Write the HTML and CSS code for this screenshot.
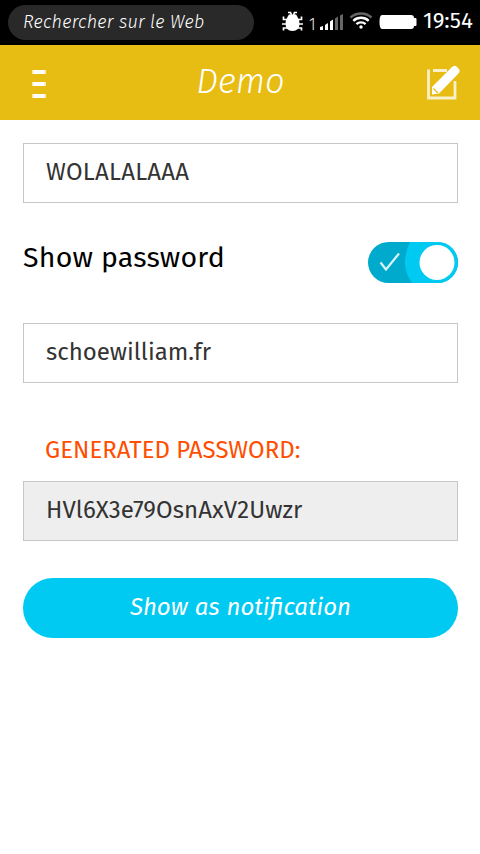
FILE: index.html
```html
<!DOCTYPE html>
<html lang="fr">
<head>
<meta charset="utf-8">
<meta name="viewport" content="width=device-width">
<title>Demo</title>
<link rel="stylesheet" href="styles.css">
</head>
<body>
<div class="statusbar">
  <div class="search"><span class="search-text">Rechercher sur le Web</span></div>
  <svg class="status-icons" width="138" height="45" viewBox="280 0 138 45">
    <path d="M289 14.500h7q1 1 1.500 2.500q2 2.500 2 6.500q0 7.500-7 7.500t-7-7.500q0-4 2-6.500q.5-1.500 1.500-2.500z" fill="#fff"/>
    <path d="M288 12.500h2.500l1 2.500M297 12.500h-2.500l-1 2.500M283.500 16.500v3h4M301.500 16.500v3h-4M282 24h21M283.500 30.500v-2.500h4M301.500 30.500v-2.500h-4" fill="none" stroke="#fff" stroke-width="1.700"/>
    <text class="sim" x="309" y="30">1</text>
    <path fill="#fff" d="M320 27l3-1v4h-3zM325 25l3-2v7h-3zM330 21.500l3-2v10.500h-3z"/>
    <path fill="#666" d="M335 18.500l3-2v13.500h-3zM340 15.500l3-1.500v16h-3z"/>
    <g fill="none" stroke="#fff" stroke-width="2.400">
      <path stroke="#666" d="M350.500 17.500c6-5.300 15-5.300 21 0"/>
      <path d="M353.300 20.800c4.400-4 11-4 15.400 0M356.400 24.200c2.600-2.400 6.600-2.400 9.200 0"/>
    </g>
    <circle cx="361" cy="27" r="1.700" fill="#fff"/>
    <path fill="#fff" d="M382 15h29q3 0 3 3h1.500q1 0 1 1v6q0 1-1 1h-1.500q0 3-3 3h-29q-2.500 0-2.500-7t2.500-7z"/>
  </svg>
  <span class="clock">19:54</span>
</div>
<header class="header">
  <svg class="menu" width="16" height="32" viewBox="0 0 16 32"><path fill="#fff" opacity=".7" d="M2 2h14v4H2zM2 14h14v4H2zM2 26h14v4H2z"/><path fill="#fff" d="M3.500 2h11v4h-11zM3.500 14h11v4h-11zM3.500 26h11v4h-11z"/></svg>
  <h1 class="title"><span class="title-text">Demo</span></h1>
  <svg class="edit" width="36" height="36" viewBox="0 0 36 36">
    <path d="M4 6H2.500v27H29V16M7 5.500h14" fill="none" stroke="#f9efcb" stroke-width="2.800"/>
    <path d="M6 29.500v-7.500L25.500 2.500q3-3 5.500-.5l1.500 1.500q2.500 2.500-.5 5.500L13 28.500z" fill="#fff"/>
    <path d="M7.500 23.500l4.500 4.500" stroke="#e7bd13" stroke-width="1.200"/>
  </svg>
</header>
<main class="content">
  <div class="field"><span class="value-name">WOLALALAAA</span></div>
  <div class="option">
    <span class="option-label">Show password</span>
    <svg class="switch" width="90" height="41" viewBox="0 0 90 41">
      <rect width="90" height="41" rx="20.500" fill="#00aacc"/>
      <path d="M42 0h27.500a20.500 20.500 0 0 1 0 41H44Q37 31 37 20.500T42 0z" fill="#00caf2"/>
      <circle cx="69" cy="20.500" r="17.500" fill="#fff"/>
      <path d="M12.500 20.500l5.500 7 13-16" fill="none" stroke="#d9f5fa" stroke-width="2.200"/>
    </svg>
  </div>
  <div class="field"><span class="value-site">schoewilliam.fr</span></div>
  <div class="caption"><span class="caption-text">GENERATED PASSWORD:</span></div>
  <div class="field readonly"><span class="value-pass">HVl6X3e79OsnAxV2Uwzr</span></div>
  <div class="button"><span class="button-text">Show as notification</span></div>
</main>
</body>
</html>
```
FILE: styles.css
```css
* { box-sizing: border-box; }
body {
  margin: 0;
  background: #fff;
  font-family: "Fira Sans", "Noto Sans", sans-serif;
}
.statusbar {
  display: flex;
  align-items: center;
  height: 45px;
  padding-left: 8px;
  background: #000;
  color: #fff;
}
.search {
  width: 246px;
  height: 35px;
  margin-right: 26px;
  padding-left: 15px;
  border-radius: 18px;
  background: #292929;
  line-height: 34px;
  font-size: 18px;
  letter-spacing: 0.22px;
  font-style: italic;
  font-weight: 300;
  white-space: nowrap;
}
.status-icons { flex: none; }
.sim { font-size: 16px; font-weight: 300; fill: #eee; }
.clock {
  margin-left: 5px;
  line-height: 41px;
  height: 45px;
  font-size: 22.3px;
}
.header {
  display: flex;
  align-items: center;
  height: 75px;
  padding: 0 18px 0 30px;
  background: #e7bd13;
  color: #fff;
}
.menu { margin-top: 3px; }
.title {
  flex: 1;
  margin: 0;
  padding-left: 9px;
  line-height: 75px;
  height: 77px;
  font-size: 34.5px;
  font-style: italic;
  font-weight: 300;
  text-align: center;
}
.edit { margin-top: 0; }
.content { padding: 23px 22px 0 23px; }
.field {
  height: 60px;
  padding-left: 22px;
  border: 1px solid #c7c7c7;
  line-height: 56px;
  font-size: 24px;
  color: #333;
  white-space: nowrap;
}
.value-name { letter-spacing: 0.22px; }
.value-pass { letter-spacing: 0.1px; }
.readonly { background: #eee; }
.option {
  display: flex;
  justify-content: space-between;
  height: 120px;
  padding-top: 39px;
}
.option-label {
  line-height: 32px;
  font-size: 28.5px;
  letter-spacing: 0.22px;
  color: #000;
}
.caption {
  height: 98px;
  padding: 50px 0 0 22px;
  line-height: 34px;
  font-size: 24px;
  color: #ff4e00;
  white-space: nowrap;
}
.button {
  height: 60px;
  margin-top: 37px;
  border-radius: 30px;
  background: #00caf2;
  color: #fff;
  line-height: 58px;
  font-size: 24px;
  font-style: italic;
  text-align: center;
}
.button-text { word-spacing: 0.8px; }
```
